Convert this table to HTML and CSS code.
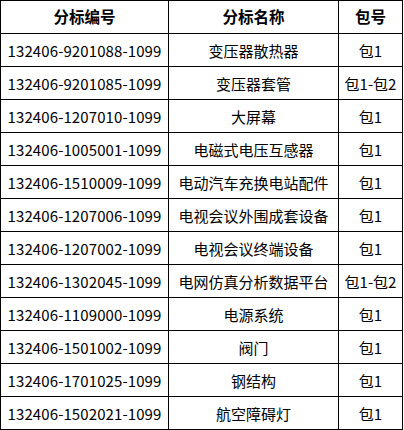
FILE: index.html
```html
<!DOCTYPE html>
<html lang="zh-CN">
<head>
<meta charset="utf-8">
<title>分标列表</title>
<link rel="stylesheet" href="styles.css">
</head>
<body>
<div class="grid" role="table">
  <div class="cell head">分标编号</div><div class="cell head">分标名称</div><div class="cell head">包号</div>
  <div class="cell code">132406-9201088-1099</div><div class="cell name">变压器散热器</div><div class="cell pkg">包1</div>
  <div class="cell code">132406-9201085-1099</div><div class="cell name">变压器套管</div><div class="cell pkg">包1-包2</div>
  <div class="cell code">132406-1207010-1099</div><div class="cell name">大屏幕</div><div class="cell pkg">包1</div>
  <div class="cell code">132406-1005001-1099</div><div class="cell name">电磁式电压互感器</div><div class="cell pkg">包1</div>
  <div class="cell code">132406-1510009-1099</div><div class="cell name">电动汽车充换电站配件</div><div class="cell pkg">包1</div>
  <div class="cell code">132406-1207006-1099</div><div class="cell name">电视会议外围成套设备</div><div class="cell pkg">包1</div>
  <div class="cell code">132406-1207002-1099</div><div class="cell name">电视会议终端设备</div><div class="cell pkg">包1</div>
  <div class="cell code">132406-1302045-1099</div><div class="cell name">电网仿真分析数据平台</div><div class="cell pkg">包1-包2</div>
  <div class="cell code">132406-1109000-1099</div><div class="cell name">电源系统</div><div class="cell pkg">包1</div>
  <div class="cell code">132406-1501002-1099</div><div class="cell name">阀门</div><div class="cell pkg">包1</div>
  <div class="cell code">132406-1701025-1099</div><div class="cell name">钢结构</div><div class="cell pkg">包1</div>
  <div class="cell code">132406-1502021-1099</div><div class="cell name">航空障碍灯</div><div class="cell pkg">包1</div>
</div>
</body>
</html>
```
FILE: styles.css
```css
html, body {
  margin: 0;
  padding: 0;
  background: #fff;
}
.grid {
  display: grid;
  grid-template-columns: 167px 169px 63px;
  grid-auto-rows: 32px;
  gap: 1px;
  width: max-content;
  padding: 1px;
  background: #000;
  font-family: "Noto Sans CJK SC", sans-serif;
  font-size: 15px;
  color: #000;
}
.cell {
  background: #fff;
  display: flex;
  align-items: center;
  justify-content: center;
  white-space: nowrap;
  line-height: 1;
}
.head {
  font-weight: bold;
  font-size: 15.5px;
}
.code {
  font-size: 15px;
  letter-spacing: 0.1px;
}
.name {
  font-size: 15px;
}
.pkg {
  font-size: 15px;
}
```
